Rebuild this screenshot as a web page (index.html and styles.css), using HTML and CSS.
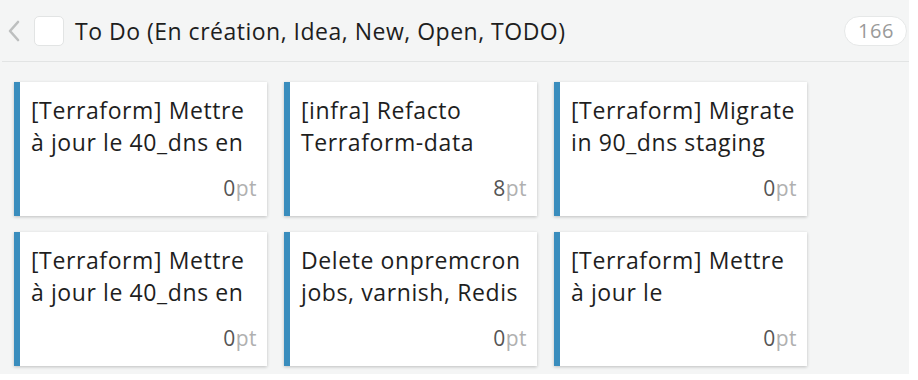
FILE: index.html
```html
<!DOCTYPE html>
<html lang="fr">
<head>
<meta charset="UTF-8">
<title>To Do</title>
<link rel="stylesheet" href="styles.css">
</head>
<body>

<!-- colonne kanban -->
<section class="column">
  <header class="col-head">
    <button class="fold" aria-label="Replier">
      <svg width="14" height="22" viewBox="0 0 14 22"><path d="M11 2 L3 11 L11 20" fill="none" stroke="#bdbfbf" stroke-width="2.6" stroke-linecap="round" stroke-linejoin="round"/></svg>
    </button>
    <span class="check"></span>
    <h2 class="col-title">To Do (En création, Idea, New, Open, TODO)</h2>
    <span class="count">166</span>
  </header>

  <div class="cards">
    <div class="card">
      <p class="card-title">[Terraform] Mettre à jour le 40_dns en</p>
      <div class="points"><b>0</b>pt</div>
    </div>
    <div class="card">
      <p class="card-title">[infra] Refacto Terraform-data</p>
      <div class="points"><b>8</b>pt</div>
    </div>
    <div class="card">
      <p class="card-title">[Terraform] Migrate in 90_dns staging</p>
      <div class="points"><b>0</b>pt</div>
    </div>
    <div class="card">
      <p class="card-title">[Terraform] Mettre à jour le 40_dns en</p>
      <div class="points"><b>0</b>pt</div>
    </div>
    <div class="card">
      <p class="card-title">Delete onpremcron jobs, varnish, Redis</p>
      <div class="points"><b>0</b>pt</div>
    </div>
    <div class="card">
      <p class="card-title">[Terraform] Mettre à jour le</p>
      <div class="points"><b>0</b>pt</div>
    </div>
  </div>
</section>

</body>
</html>
```

FILE: styles.css
```css
*{box-sizing:border-box;margin:0;padding:0}
body{background:#fff;font-family:'Open Sans','Noto Sans',sans-serif;color:#222}
.column{width:909px;background:#f4f5f5;padding-bottom:8px}
/* header */
.col-head{display:flex;align-items:center;height:62px;margin-left:2px;border-bottom:1px solid #e2e4e4;padding:0 2px}
.fold{background:none;border:none;width:16px;height:24px;display:flex;align-items:center;justify-content:center;margin-left:2px;cursor:pointer}
.check{width:30px;height:30px;background:#fff;border:1px solid #e2e4e4;border-radius:5px;margin-left:12px}
.col-title{font-size:23px;letter-spacing:.5px;font-weight:400;margin-left:11px;flex:1;white-space:nowrap;color:#1e1e1e}
.count{font-size:20px;letter-spacing:.6px;color:#9a9a9a;background:#fff;border:1px solid #e6e8e8;border-radius:15px;height:30px;padding:0 12px 0 13px;display:flex;align-items:center}
/* cards */
.cards{display:grid;grid-template-columns:repeat(3,253px);column-gap:17px;row-gap:16px;padding:20px 14px 0}
.card{height:134px;background:#fff;border-left:6px solid #3a8dbd;box-shadow:0 1px 3px rgba(0,0,0,.22);padding:12px 7px 16px 11px;display:flex;flex-direction:column}
.card-title{font-size:23px;letter-spacing:.6px;line-height:32px;color:#1e1e1e}
.points{margin-top:auto;margin-right:3px;text-align:right;font-size:21px;letter-spacing:.5px;color:#b0b0b0;line-height:24px}
.points b{font-weight:400;color:#555}
```
